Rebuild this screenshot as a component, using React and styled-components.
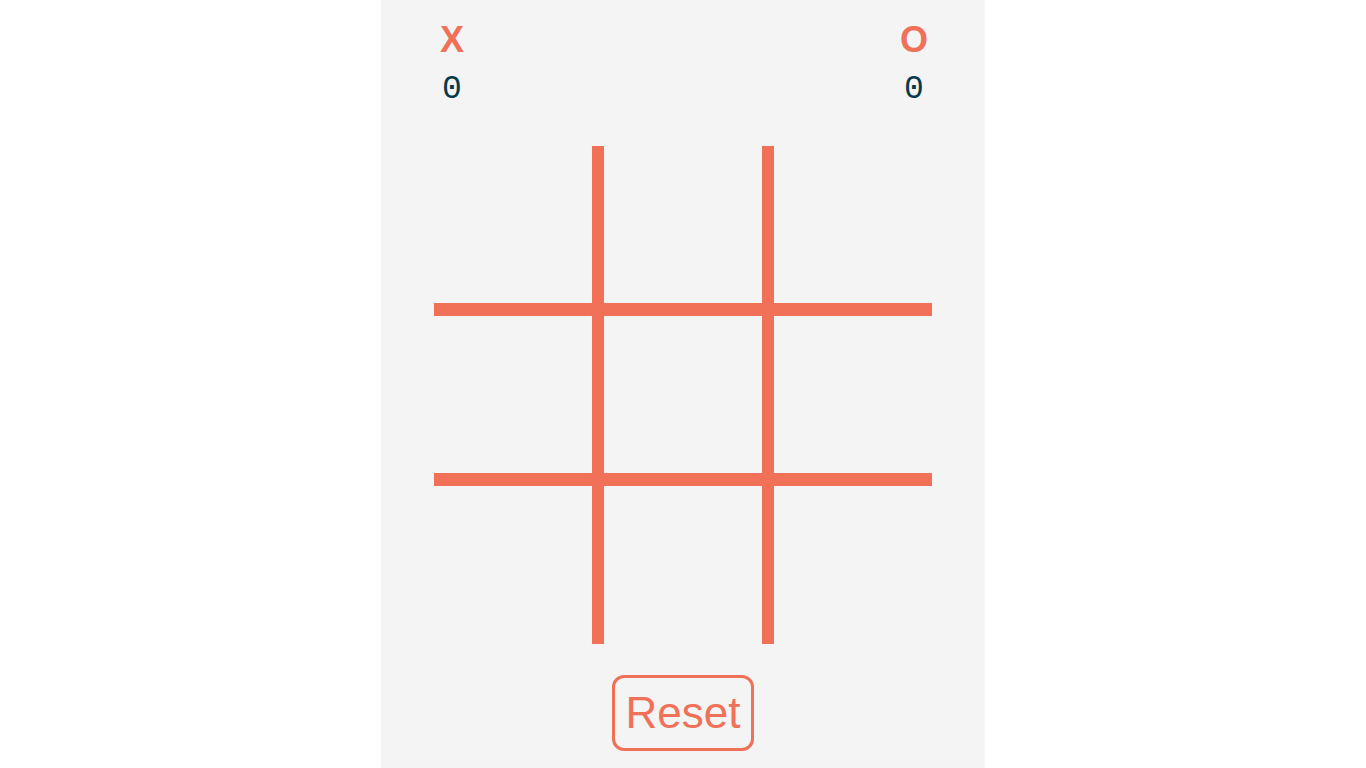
import styled, { createGlobalStyle } from 'styled-components';

const GlobalStyle = createGlobalStyle`
  body {
    margin: 0;
    background: #ffffff;
    font-family: "Liberation Sans", Arial, sans-serif;
  }
`;

const Panel = styled.main`
  width: 604px;
  min-height: 100vh;
  margin: 0 auto;
  padding-top: 20px;
  box-sizing: border-box;
  background-color: #f4f4f4;
  display: flex;
  flex-direction: column;
  align-items: center;
`;

const Header = styled.header`
  width: 498px;
  display: flex;
  justify-content: space-between;
`;

const Player = styled.div`
  width: 36px;
  display: flex;
  flex-direction: column;
  align-items: center;
  gap: 12px;
`;

const Mark = styled.span`
  font-size: 36px;
  line-height: 40px;
  font-weight: 700;
  color: #f07058;
`;

const Score = styled.span`
  font-family: "Liberation Mono", "DejaVu Sans Mono", monospace;
  font-size: 33px;
  line-height: 35px;
  color: #073b4c;
`;

const Board = styled.div`
  margin-top: 39px;
  display: grid;
  grid-template-columns: 170px 170px 158px;
  grid-template-rows: 170px 170px 158px;
`;

const Cell = styled.div`
  box-sizing: border-box;
  border-right: ${p => (p.$right ? '12px solid #f07058' : 'none')};
  border-bottom: ${p => (p.$bottom ? '13px solid #f07058' : 'none')};
`;

const ResetButton = styled.button`
  margin-top: 31px;
  padding: 10px 11px;
  border: 3px solid #f07058;
  border-radius: 12px;
  background: transparent;
  color: #f07058;
  font-family: "Liberation Sans", Arial, sans-serif;
  font-size: 44px;
  line-height: 50px;
  cursor: pointer;
`;

const players = [
  { mark: 'X', score: 0 },
  { mark: 'O', score: 0 },
];

export default function App() {
  const cells = Array.from({ length: 9 }, (_, i) => i);

  return (
    <>
      <GlobalStyle />
      <Panel>
        <Header>
          {players.map(p => (
            <Player key={p.mark}>
              <Mark>{p.mark}</Mark>
              <Score>{p.score}</Score>
            </Player>
          ))}
        </Header>
        <Board>
          {cells.map(i => (
            <Cell key={i} $right={i % 3 !== 2} $bottom={i < 6} />
          ))}
        </Board>
        <ResetButton type="button">Reset</ResetButton>
      </Panel>
    </>
  );
}
